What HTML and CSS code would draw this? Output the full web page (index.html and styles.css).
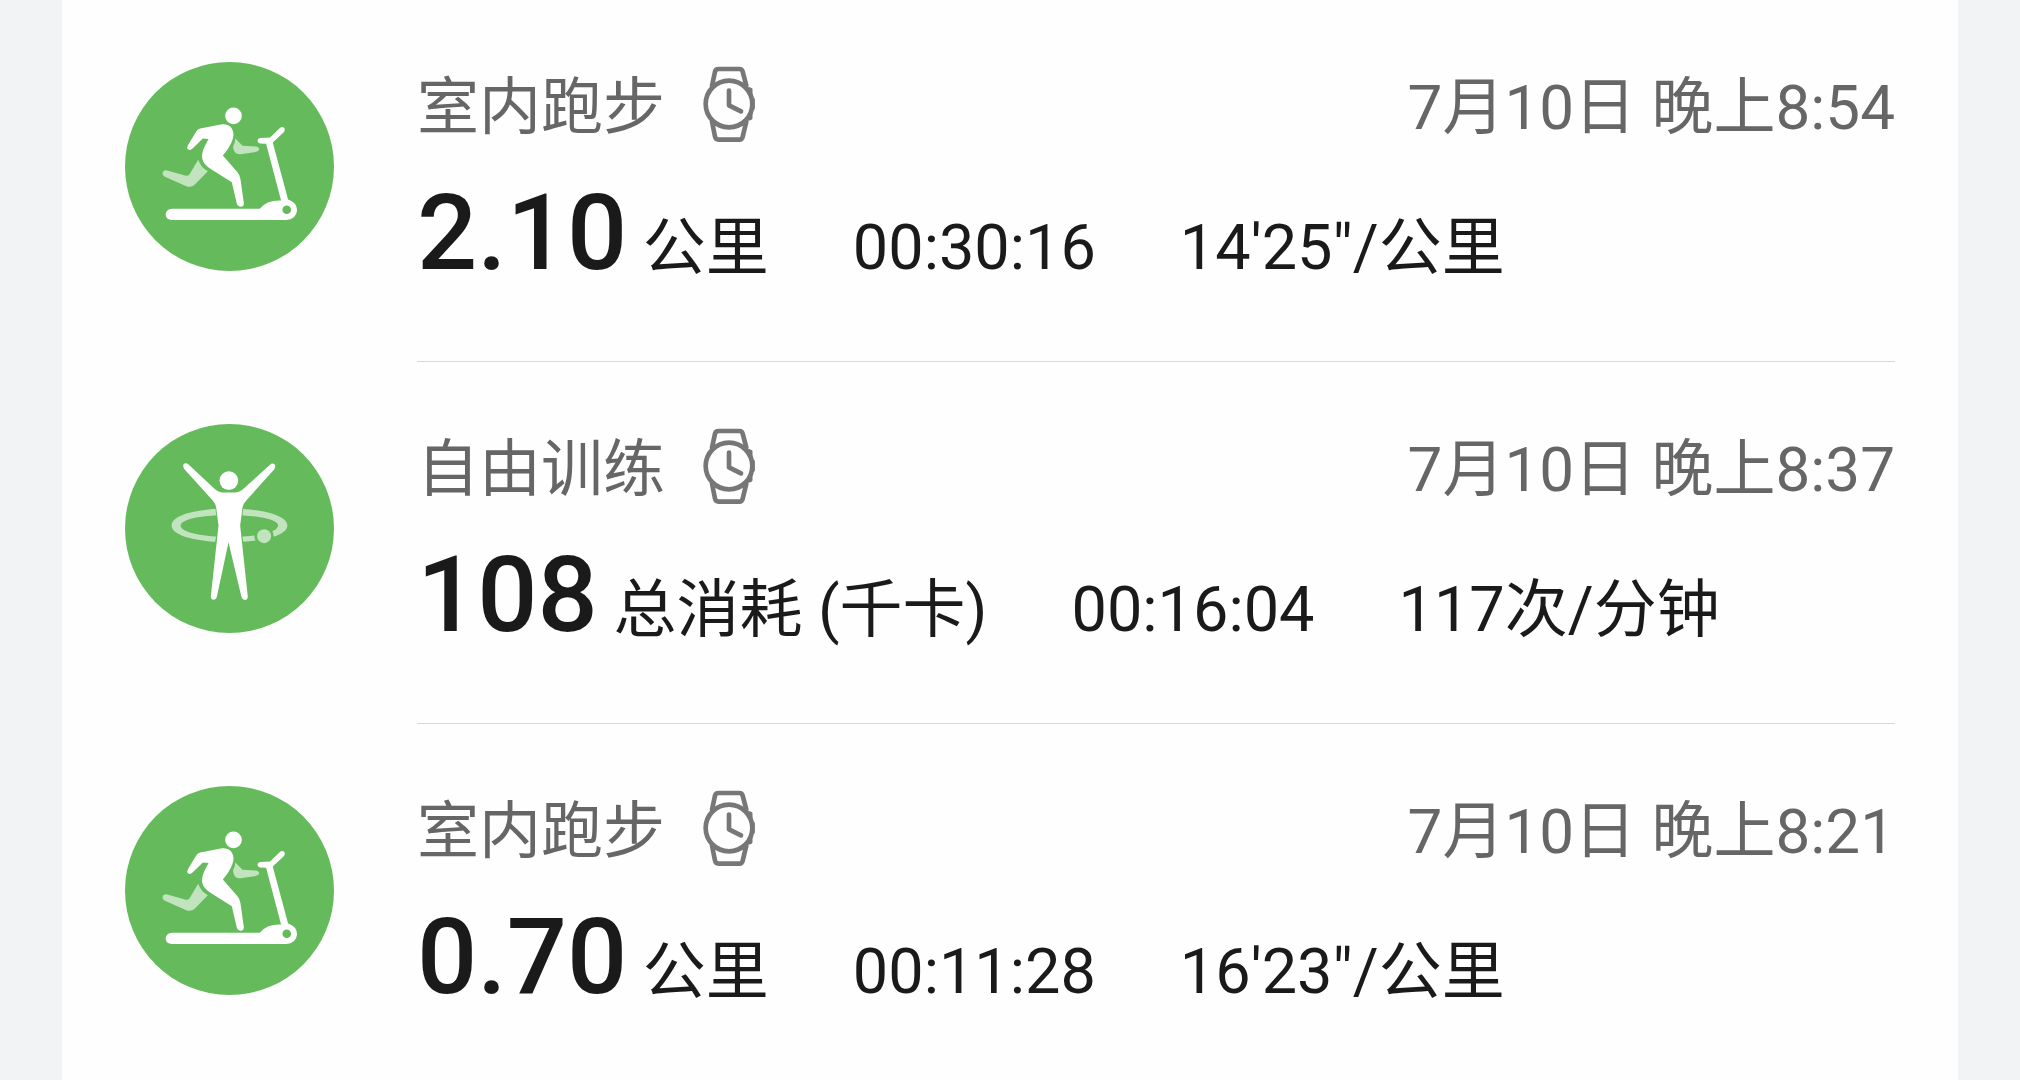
FILE: index.html
```html
<!DOCTYPE html>
<html lang="zh-CN">
<head>
    <meta charset="UTF-8">
    <meta name="viewport" content="width=device-width, initial-scale=1.0">
    <title>运动记录</title>
    <link rel="stylesheet" href="styles.css">
</head>
<body>

<!-- Shared icons -->
<svg class="sprite" aria-hidden="true">
    <symbol id="icon-treadmill" viewBox="44 36 628 628">
        <circle class="icon-bg" cx="358" cy="350" r="314"/>
        <path class="icon-dim" d="M264 330 Q272 354 293 364 L254 404 Q244 414 230 410 L164 381 Q154 375 158 366 Q162 359 171 362 L227 378 Q234 379 238 373 Z"/>
        <path class="icon-dim" d="M375 265 L397 288 L438 290 Q447 292 447 299 Q446 305 438 306 L391 313 Q378 314 373 305 Q366 294 371 284 Q376 275 375 265 Z"/>
        <circle class="icon-fg" cx="370" cy="198" r="25"/>
        <path class="icon-fg" d="M270 236 L336 223 Q355 222 364 234 Q375 251 366 273 Q358 294 338 317 L382 367 Q389 375 391 388 L401 460 Q402 470 393 471 Q383 471 380 462 L365 397 L303 358 Q280 345 276 326 Q274 310 283 291 L295 267 L278 266 L247 296 Q240 303 233 298 Q229 294 233 286 L258 245 Q262 238 270 236 Z"/>
        <path class="icon-fg" d="M185 477 L449 477 Q468 452 508 452 L513 452 L468 282 L450 281 Q442 279 442 272 Q443 265 451 264 L480 263 L511 233 Q518 229 523 235 Q526 241 521 247 L488 278 L534 449 Q560 457 561 482 Q558 509 528 511 L185 511 Q167 509 166 494 Q167 479 185 477 Z"/>
        <circle class="icon-bg" cx="530" cy="480" r="13"/>
    </symbol>
    <symbol id="icon-training" viewBox="44 43 628 628">
        <circle class="icon-bg" cx="358" cy="357" r="314"/>
        <path class="icon-dim" fill-rule="evenodd" d="M184 348 C184 280 530 280 532 348 C530 415 184 415 184 348 Z M211 348 C214 394 502 394 504 348 C502 306 214 306 211 348 Z"/>
        <circle class="icon-bg" cx="462" cy="380" r="29"/>
        <circle class="icon-dim" cx="462" cy="380" r="21"/>
        <path class="icon-bg" d="M314 284 L323 355 L312 410 L402 410 L392 355 L401 284 Z"/>
        <circle class="icon-fg" cx="356" cy="213" r="28"/>
        <path class="icon-fg" d="M220 164 Q227 158 234 164 L312 237 Q323 248 337 249 L376 249 Q390 248 401 237 L479 166 Q487 158 494 165 Q498 172 492 180 L409 272 Q400 281 397 294 L390 348 L413 561 Q413 571 404 572 Q396 571 394 563 L355 398 L320 562 Q318 571 309 571 Q301 570 302 560 L325 348 L318 294 Q316 282 307 272 L222 178 Q217 170 220 164 Z"/>
    </symbol>
    <symbol id="icon-watch" viewBox="70 48 156 231">
        <g fill="none" stroke="#777" stroke-width="14" stroke-linecap="round" stroke-linejoin="round">
            <path d="M97 107 L106 65 Q108 57 117 57 L179 57 Q187 57 189 65 L200 107"/>
            <path d="M97 215 L106 260 Q108 269 117 269 L179 269 Q187 269 189 260 L200 215"/>
            <circle cx="148" cy="162" r="70"/>
            <path d="M148 122 L148 166 L184 184"/>
            <path stroke-width="9" d="M209 116 L214 118 L214 129 M221 148 L221 175 M214 195 L214 205 L209 207"/>
        </g>
    </symbol>
</svg>

<main class="card">
    <ul class="records">
        <li class="record">
            <svg class="sport-icon" role="img" aria-label="室内跑步"><use href="#icon-treadmill"/></svg>
            <div class="info">
                <div class="head">
                    <h2 class="title">室内跑步</h2>
                    <svg class="watch" aria-hidden="true"><use href="#icon-watch"/></svg>
                    <time class="date" datetime="07-10T20:54">7月10日 晚上8:54</time>
                </div>
                <div class="metrics">
                    <span><strong class="value">2.10</strong> 公里</span>
                    <span>00:30:16</span>
                    <span>14'25"/公里</span>
                </div>
            </div>
        </li>
        <li class="record">
            <svg class="sport-icon" role="img" aria-label="自由训练"><use href="#icon-training"/></svg>
            <div class="info">
                <div class="head">
                    <h2 class="title">自由训练</h2>
                    <svg class="watch" aria-hidden="true"><use href="#icon-watch"/></svg>
                    <time class="date" datetime="07-10T20:37">7月10日 晚上8:37</time>
                </div>
                <div class="metrics">
                    <span><strong class="value">108</strong> 总消耗 (千卡)</span>
                    <span>00:16:04</span>
                    <span>117次/分钟</span>
                </div>
            </div>
        </li>
        <li class="record">
            <svg class="sport-icon" role="img" aria-label="室内跑步"><use href="#icon-treadmill"/></svg>
            <div class="info">
                <div class="head">
                    <h2 class="title">室内跑步</h2>
                    <svg class="watch" aria-hidden="true"><use href="#icon-watch"/></svg>
                    <time class="date" datetime="07-10T20:21">7月10日 晚上8:21</time>
                </div>
                <div class="metrics">
                    <span><strong class="value">0.70</strong> 公里</span>
                    <span>00:11:28</span>
                    <span>16'23"/公里</span>
                </div>
            </div>
        </li>
    </ul>
</main>

</body>
</html>
```
FILE: styles.css
```css
body {
    font-family: Roboto, "Noto Sans CJK SC", sans-serif;
    font-size: 62px;
    background-color: #f1f3f5;
    color: #1a1a1a;
    margin: 0;
}

.sprite {
    position: absolute;
    width: 0;
    height: 0;
}

.icon-bg {
    fill: #65bb5c;
}

.icon-fg {
    fill: #fff;
}

.icon-dim {
    fill: #c1e4be;
}

.card {
    background-color: #fefefe;
    margin: 0 62px;
    padding: 0 63px;
    min-height: 100vh;
    box-sizing: border-box;
}

.records {
    list-style: none;
    margin: 0;
    padding: 0;
}

.record {
    display: flex;
    gap: 83px;
    padding-top: 62px;
}

.sport-icon {
    flex: none;
    width: 209px;
    height: 209px;
}

.info {
    flex: 1;
    padding-bottom: 49px;
    border-bottom: 1px solid #d8d8d8;
}

.record:last-child .info {
    padding-bottom: 0;
    border-bottom: none;
}

.head {
    display: flex;
    align-items: center;
    height: 92px;
    color: #666;
}

.title {
    font-size: 62px;
    font-weight: 400;
    line-height: 92px;
    margin: 0;
}

.watch {
    width: 52px;
    height: 77px;
    margin-left: 38px;
    margin-bottom: 8px;
}

.date {
    margin-left: auto;
    line-height: 92px;
}

.metrics {
    display: flex;
    align-items: baseline;
    gap: 84px;
    height: 158px;
    font-size: 63px;
    line-height: 158px;
    white-space: nowrap;
}

.value {
    font-size: 106px;
    font-weight: 500;
}
```
